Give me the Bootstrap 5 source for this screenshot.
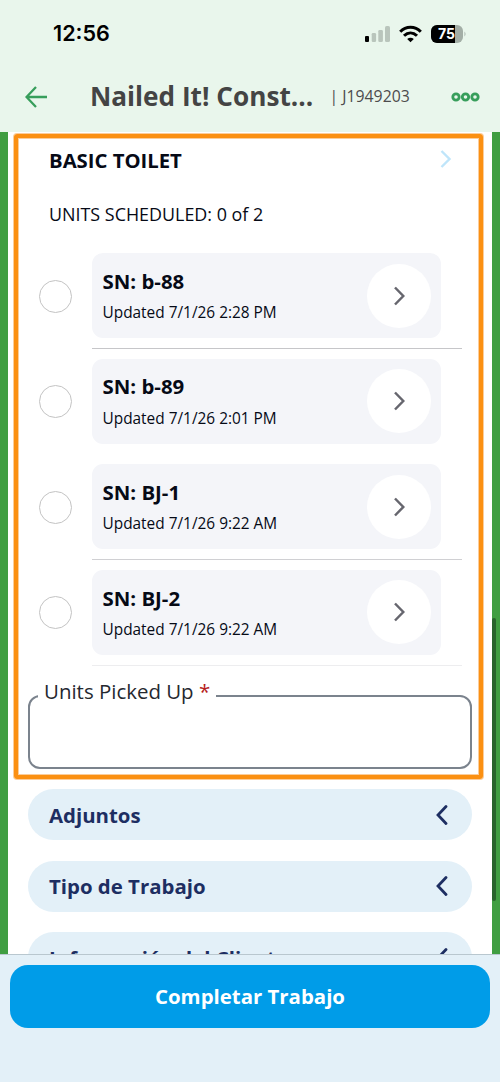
<!DOCTYPE html>
<html lang="es">
<head>
<meta charset="utf-8">
<meta name="viewport" content="width=device-width, initial-scale=1">
<title>Nailed It! Construction</title>
<link href="https://cdn.jsdelivr.net/npm/bootstrap@5.3.0/dist/css/bootstrap.min.css" rel="stylesheet">
<style>
body{font-family:"Open Sans",sans-serif;height:1082px;background:#409e42;color:#060a16;white-space:nowrap}
svg{display:block;flex:none}
.app-head{height:132px;background:#e9f6ec}
.status{height:66px;padding:1px 33px 0 53px;color:#000}
.clock{font:600 21.6px/1 Inter,sans-serif}
.title-bar{height:62px;padding:0 20px 0 25px}
.title-bar h1{font-size:26.2px;font-weight:700;color:#444;margin:0 0 0 43px;width:223px}
.job-no{font-size:15.8px;color:#4c4c4c;margin-left:16.5px}
.sheet{margin:0 8px;height:822px;background:#fff;padding:2px 9px 0 6px}
.focus-box{height:645px;border:4px solid #fb9012;border-radius:3px;box-shadow:0 0 0 1px #fbcd9b,inset 0 0 0 1px #fbcd9b;padding:0 7px 0 10px}
.group-title{height:44px;padding:0 20.5px 0 21px;font-weight:700;font-size:20.3px}
.group-title svg{margin-top:-2px}
.scheduled{height:71px;line-height:65px;padding-left:21px;font-size:17.9px}
.unit-row{height:105.6px}
.pick{width:33px;height:33px;border:1.5px solid #c3c3c3;border-radius:50%;margin:26.5px 20px 0 11px;flex:none}
.unit-main{width:370px;height:96px;border-bottom:1px solid #c6c6c9}
.unit-card{width:349px;height:85px;border-radius:11px;background:#f4f5f9;padding:0 10px 0 10.5px}
.unit-card strong{font-size:20.4px;line-height:28px}
.unit-card span{font-size:15.4px;line-height:22px;margin-top:7.5px}
.go{width:64px;height:64px}
.picked{height:88px;margin-top:6px;border:2px solid #7b838d;border-radius:12px;padding:0 0 0 8px}
.picked legend{font-size:20.45px;line-height:20px;padding:0 6px 10px;color:#25282f;margin:0;width:auto;float:none}
.picked legend b{color:#b61c1c;font-weight:400}
.folds{padding-top:10px}
.fold{height:51px;margin:0 11px 20.7px 14px;border-radius:26px;background:#e3f0f8;padding:0 24px 0 21px;font-weight:700;font-size:20.4px;color:#1d2e62}
.fold span{padding-top:1px}
.foot{height:128px;background:#e3f0f8;border-top:1px solid #b9c7cf;padding:10px 10px 0}
.foot .btn{height:63px;border:0;border-radius:18px;background:#009ce8;font-weight:700;font-size:20.4px;color:#fff}
.scroll-thumb{right:4px;top:618px;width:4px;height:283px;border-radius:2px;background:#28642c}
</style>
</head>
<body class="overflow-hidden position-relative">
<header class="app-head">
  <div class="status d-flex align-items-center">
    <span class="clock me-auto">12:56</span>
    <svg width="26" height="18" viewBox="0 0 26 18"><rect x="0" y="11" width="4" height="6" rx="1"/><g fill="#b9c5bc"><rect x="6.7" y="8" width="4.4" height="9" rx="1.3"/><rect x="13.3" y="5" width="4.6" height="12" rx="1.3"/><rect x="20" y="1" width="5" height="16" rx="1.6"/></g></svg>
    <svg class="ms-2" width="23" height="18" viewBox="0 0 23 18" fill="none" stroke="#000" stroke-width="3"><path d="M1.2 6.8C7 .8 16 .8 21.8 6.8"/><path d="M5 10.8c4-3.9 9-3.9 13 0"/><path d="M8.2 13.9c2-1.7 4.6-1.7 6.6 0L11.5 17.2z" fill="#000" stroke="none"/></svg>
    <svg width="36" height="18" viewBox="0 0 36 18" style="margin-left:9px"><defs><clipPath id="bat"><rect width="32" height="18" rx="6"/></clipPath></defs><g clip-path="url(#bat)"><rect width="32" height="18" fill="#a3aea6"/><rect width="24" height="18"/></g><path d="M33.5 6.5q2 2.5 0 5z" fill="#a3aea6"/><text x="7" y="14.4" font-family="Inter" font-weight="700" font-size="15" textLength="17" lengthAdjust="spacingAndGlyphs" fill="#fff">75</text></svg>
  </div>
  <div class="title-bar d-flex align-items-center">
    <svg width="22" height="22" viewBox="0 0 22 22" fill="none" stroke="#379e5b" stroke-width="2.3"><path d="M22 11H1.5M11 1 1.5 11 11 21"/></svg>
    <h1>Nailed It! Const...</h1>
    <span class="job-no">| J1949203</span>
    <svg class="ms-auto" width="29" height="10" viewBox="0 0 29 10" fill="none" stroke="#379e5b" stroke-width="2.8"><circle cx="5" cy="5" r="3.2"/><circle cx="14.5" cy="5" r="3.2"/><circle cx="24" cy="5" r="3.2"/></svg>
  </div>
</header>
<main class="sheet overflow-hidden">
  <section class="focus-box">
    <div class="group-title d-flex align-items-center justify-content-between"><span>BASIC TOILET</span>
      <svg width="12" height="18" viewBox="0 0 12 18" fill="none" stroke="#bfe5fa" stroke-width="2.4"><path d="m1.5 1 8 8-8 8"/></svg></div>
    <div class="scheduled">UNITS SCHEDULED: 0 of 2</div>
    <div class="units"></div>
    <fieldset class="picked"><legend>Units Picked Up <b>*</b></legend></fieldset>
  </section>
  <div class="folds"></div>
</main>
<footer class="foot"><button class="btn w-100">Completar Trabajo</button></footer>
<div class="scroll-thumb position-absolute"></div>
<script>
const units=[['b-88','7/1/26 2:28 PM','#c6c6c9'],['b-89','7/1/26 2:01 PM','#fff'],['BJ-1','7/1/26 9:22 AM','#d0d0d3'],['BJ-2','7/1/26 9:22 AM','#ededef']];
document.querySelector('.units').innerHTML=units.map(([sn,t,line])=>`<div class="unit-row d-flex"><div class="pick"></div><div class="unit-main" style="border-color:${line}"><div class="unit-card d-flex align-items-center justify-content-between"><div class="d-flex flex-column"><strong>SN: ${sn}</strong><span>Updated ${t}</span></div><div class="go bg-white rounded-circle d-flex align-items-center justify-content-center"><svg width="12" height="20" viewBox="0 0 12 20" fill="none" stroke="#66666e" stroke-width="2.5"><path d="m2 1.5 8.3 8.5L2 18.5"/></svg></div></div></div></div>`).join('');
document.querySelector('.folds').innerHTML=['Adjuntos','Tipo de Trabajo','Información del Cliente'].map(t=>`<div class="fold d-flex align-items-center justify-content-between"><span>${t}</span><svg width="12" height="20" viewBox="0 0 12 20" fill="none" stroke="#1d2e62" stroke-width="2.8" stroke-linecap="round"><path d="M10 1.5 2 10l8 8.5"/></svg></div>`).join('');
</script>
<script src="https://cdn.jsdelivr.net/npm/bootstrap@5.3.0/dist/js/bootstrap.bundle.min.js"></script>
</body>
</html>
